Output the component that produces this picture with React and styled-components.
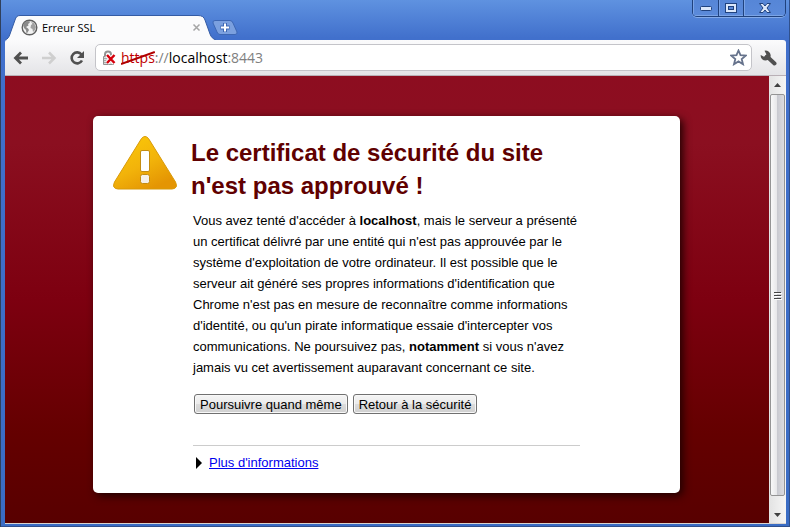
import styled, { createGlobalStyle } from "styled-components";

const GlobalStyle = createGlobalStyle`
  * {
    box-sizing: border-box;
  }
  body {
    margin: 0;
    font-family: "Liberation Sans", Arial, sans-serif;
  }
`;

const Window = styled.div`
  min-height: 100vh;
  display: flex;
  flex-direction: column;
  padding: 0 4px 3px 5px;
  background: linear-gradient(#5f92e0, #4170cc 38px, #3a6cc4);
  box-shadow: inset 1px 0 #30405c, inset -1px 0 #30508c, inset 0 -1px #30508c;
`;

const TitleBar = styled.header`
  display: flex;
  align-items: flex-end;
  justify-content: space-between;
  height: 40px;
`;

const TabStrip = styled.div`
  display: flex;
  align-items: flex-end;
`;

const Tab = styled.div`
  position: relative;
  display: flex;
  align-items: center;
  gap: 4px;
  width: 211px;
  height: 25px;
  padding: 0 15px 0 16px;
`;

const TabShape = styled.svg`
  position: absolute;
  left: 0;
  top: 0;
`;

const TabTitle = styled.span`
  position: relative;
  flex: 1;
  font: 11px/16px "Open Sans", sans-serif;
  color: #000;
`;

const Icon = styled.svg`
  position: relative;
  display: block;
  flex: none;
`;

const PlainButton = styled.button`
  display: flex;
  align-items: center;
  justify-content: center;
  flex: none;
  padding: 0;
  border: 0;
  background: none;
`;

const NewTab = styled(PlainButton)`
  margin: 0 0 5px -4px;
`;

const WindowControls = styled.div`
  display: flex;
  align-self: flex-start;
  height: 17px;
  border: 1px solid #20427e;
  border-top: 0;
  border-radius: 0 0 5px 5px;
  box-shadow: 0 1px #84aae8;
  overflow: hidden;
`;

const ControlButton = styled(PlainButton)`
  width: ${(props) => (props.$wide ? 42 : 25)}px;
  background: linear-gradient(#5686d7, #5b8ada);
  box-shadow: inset 1px -1px #7ba4e6;

  & + & {
    border-left: 1px solid #20427e;
  }
`;

const Toolbar = styled.nav`
  display: flex;
  align-items: center;
  height: 36px;
  padding: 0 9px 0 6px;
  background: linear-gradient(#fbfbfc, #e4e4e7);
  border-bottom: 1px solid #b9b0b6;
  border-radius: 2px 3px 0 0;
`;

const NavButton = styled(PlainButton)`
  width: 20px;
  height: 24px;
  margin-right: 8px;
`;

const AddressBar = styled.div`
  display: flex;
  align-items: center;
  flex: 1;
  height: 27px;
  margin-right: 8px;
  padding: 0 4px 0 6px;
  background: #fff;
  border: 1px solid #c4c4c9;
  border-radius: 5px;
`;

const Url = styled.div`
  flex: 1;
  margin-left: 3px;
  font: 14px/20px "Open Sans", sans-serif;
  color: #808080;
  white-space: nowrap;
`;

const Scheme = styled.span`
  position: relative;
  color: #c00000;
`;

const Strike = styled.svg`
  position: absolute;
  left: 0;
  top: 3px;
  width: 100%;
  height: 14px;
`;

const Host = styled.span`
  color: #000;
`;

const Content = styled.div`
  flex: 1;
  display: flex;
  border-bottom: 1px solid #d8d4d0;
`;

const Page = styled.main`
  flex: 1;
  padding: 40px 17px 30px 16px;
  background: linear-gradient(#8d0d20, #8b0f20 15%, #7d0010 50%, #640000 80%, #580000);
`;

const Card = styled.section`
  display: flex;
  align-items: flex-start;
  gap: 14px;
  max-width: 587px;
  margin: 0 auto;
  padding: 20px 100px 20px 20px;
  background: #fff;
  border-radius: 5px;
  box-shadow: 3px 3px 8px #200000;
`;

const Message = styled.div`
  flex: 1;
`;

const Title = styled.h1`
  margin: 0 0 8px;
  font-size: 24px;
  line-height: 33px;
  color: #600000;
`;

const Details = styled.div`
  margin-left: 2px;
  font-size: 13px;
  line-height: 21px;
  color: #000;
`;

const Text = styled.p`
  margin: 0;
`;

const Actions = styled.div`
  display: flex;
  gap: 5px;
  padding: 16px 1px 31px;
`;

const ActionButton = styled.button`
  height: 20px;
  padding: 1px 5px 0;
  font: 13px/17px "Liberation Sans", Arial, sans-serif;
  color: #000;
  white-space: nowrap;
  background: linear-gradient(#f4f4f4, #ebebeb 50%, #dcdcdc 50%, #d0d0d0);
  border: 1px solid #707070;
  border-radius: 3px;
  box-shadow: inset 0 0 0 1px #f8f8f8;
`;

const More = styled.div`
  display: flex;
  align-items: center;
  gap: 7px;
  padding: 6px 0 0 3px;
  border-top: 1px solid #ccc;

  a {
    color: #0000ee;
  }
`;

const ScrollBar = styled.div`
  display: flex;
  flex-direction: column;
  width: 17px;
  padding-right: 1px;
  background: linear-gradient(90deg, #e3e3e3, #f5f5f5);
`;

const ScrollButton = styled(PlainButton)`
  height: ${(props) => (props.$last ? 27 : 18)}px;
  padding-top: ${(props) => (props.$last ? 10 : 0)}px;
`;

const Thumb = styled.div`
  flex: 1;
  display: flex;
  align-items: center;
  justify-content: center;
  margin: 0 0 0 1px;
  border: 1px solid #949494;
  border-radius: 2px;
  background: linear-gradient(90deg, #f8f8f8, #e7e7e9 45%, #c9cad0 50%, #dcdce0);
`;

function GlobeIcon() {
  return (
    <Icon width="17" height="17" viewBox="0 0 17 17">
      <circle cx="8.5" cy="8.5" r="7.3" fill="#f2f2f2" stroke="#606060" strokeWidth="1.4" />
      <path d="M3 4l3-2 3 .5-.5 1.5L7 5l.5 1.5L5 8l2 1.500 1 1.5-1.5 2.5-1 1L5 11 3 9 2 6z" fill="#8b8b8b" />
      <path d="M10 3l3 1 2 4-1 3-2 2-.5-3-2-1 .5-3 1.5-1z" fill="#a0a0a0" />
    </Icon>
  );
}

function LockIcon() {
  return (
    <Icon width="16" height="16" viewBox="0 0 16 16">
      <path d="M3 7V4.500a3 3 0 0 1 6 0V7" fill="none" stroke="#929292" strokeWidth="2" />
      <path d="M1.500 6.500h10v8h-10z" fill="#ddd" stroke="#929292" />
      <path d="M2 8.500h9M2 10.500h9M2 12.500h9" stroke="#aaa" />
      <path d="M5 5l7.500 8M12.500 5l-7.500 8" stroke="#fff" strokeWidth="4.5" />
      <path d="M5 5l7.500 8M12.500 5l-7.500 8" stroke="#d5000c" strokeWidth="2.5" />
    </Icon>
  );
}

function WarningIcon() {
  return (
    <Icon width="64" height="54" viewBox="0 0 64 54" aria-hidden="true">
      <defs>
        <linearGradient id="sign" x1="0" y1="0" x2="0.6" y2="1">
          <stop offset="0" stopColor="#fccb08" />
          <stop offset="0.6" stopColor="#f2b30a" />
          <stop offset="1" stopColor="#e49503" />
        </linearGradient>
      </defs>
      <path
        d="M28.5 2.5Q32-1.5 35.5 2.5L62.5 46Q65.5 52.5 59 53H5Q-1.5 52.5 1.5 46z"
        fill="url(#sign)"
        stroke="#d99a08"
      />
      <rect x="27.5" y="14.5" width="9" height="21" rx="1.5" fill="#fff" stroke="#c48c10" />
      <rect x="27.5" y="38.5" width="9" height="9" rx="2" fill="#f5f0e8" stroke="#c48c10" />
    </Icon>
  );
}

function BrowserTab() {
  return (
    <Tab>
      <TabShape width="211" height="25" viewBox="0 0 211 25">
        <path
          d="M0 25C3 24 4 22 5 19L10 5C11 2 12 .5 15 .5H193C197 .5 199 2 200 5L205 19C206 22 208 24 211 25z"
          fill="#fbfbfc"
        />
        <path
          d="M0 25C3 24 4 22 5 19L10 5C11 2 12 .5 15 .5H193C197 .5 199 2 200 5L205 19C206 22 208 24 211 25"
          fill="none"
          stroke="#345ba4"
        />
      </TabShape>
      <GlobeIcon />
      <TabTitle>Erreur SSL</TabTitle>
      <PlainButton aria-label="Fermer l'onglet">
        <Icon width="9" height="9" viewBox="0 0 9 9">
          <path d="M1.5 1.5l6 6M7.5 1.5l-6 6" stroke="#a5a5a5" strokeWidth="1.5" />
        </Icon>
      </PlainButton>
    </Tab>
  );
}

function App() {
  return (
    <>
      <GlobalStyle />
      <Window>
        <TitleBar>
          <TabStrip>
            <BrowserTab />
            <NewTab aria-label="Nouvel onglet">
              <Icon width="26" height="15" viewBox="0 0 26 15">
                <path
                  d="M3 .5H18Q20 .5 21 3L25 12Q25.5 14.5 23 14.5H8Q6 14.5 5 12L1 3Q.5 .5 3 .5z"
                  fill="#7ba0df"
                  stroke="#3d67b4"
                />
                <path d="M13 3v9M8.5 7.5h9" stroke="#3d67b4" strokeWidth="4" />
                <path d="M13 3.5v8M9 7.5h8" stroke="#fff" strokeWidth="2" />
              </Icon>
            </NewTab>
          </TabStrip>
          <WindowControls>
            <ControlButton aria-label="Réduire">
              <Icon width="12" height="5" viewBox="0 0 12 5">
                <rect x=".5" y=".5" width="11" height="4" rx="1" fill="#dbe7fa" stroke="#20427e" />
              </Icon>
            </ControlButton>
            <ControlButton aria-label="Agrandir">
              <Icon width="12" height="10" viewBox="0 0 12 10">
                <rect x=".5" y=".5" width="11" height="9" fill="#dbe7fa" stroke="#20427e" />
                <rect x="3.5" y="3.5" width="5" height="3" fill="#5b8ada" stroke="#20427e" />
              </Icon>
            </ControlButton>
            <ControlButton $wide aria-label="Fermer">
              <Icon width="12" height="10" viewBox="0 0 12 10">
                <path
                  d="M.5 .5H4L6 3L8 .5H11.5L8 5L11.5 9.5H8L6 7L4 9.5H.5L4 5z"
                  fill="#dbe7fa"
                  stroke="#20427e"
                />
              </Icon>
            </ControlButton>
          </WindowControls>
        </TitleBar>
        <Toolbar>
          <NavButton aria-label="Précédent">
            <Icon width="16" height="14" viewBox="0 0 16 14">
              <path d="M8 1.5L2.5 7L8 12.5M3 7h12" fill="none" stroke="#505050" strokeWidth="2.8" />
            </Icon>
          </NavButton>
          <NavButton aria-label="Suivant" disabled>
            <Icon width="16" height="14" viewBox="0 0 16 14">
              <path d="M8 1.5L13.5 7L8 12.5M13 7H1" fill="none" stroke="#cfcfcf" strokeWidth="2.5" />
            </Icon>
          </NavButton>
          <NavButton aria-label="Actualiser">
            <Icon width="16" height="16" viewBox="0 0 16 16">
              <path d="M12.5 4.5A5.5 5.5 0 1 0 13 10.5" fill="none" stroke="#505050" strokeWidth="2.6" />
              <path d="M15 1v7H8z" fill="#505050" />
            </Icon>
          </NavButton>
          <AddressBar>
            <LockIcon />
            <Url>
              <Scheme>
                https
                <Strike viewBox="0 0 34 14" preserveAspectRatio="none">
                  <path d="M0 13L34 1" stroke="#b00000" strokeWidth="2" />
                </Strike>
              </Scheme>
              ://<Host>localhost</Host>:8443
            </Url>
            <PlainButton aria-label="Ajouter aux favoris">
              <Icon width="17" height="17" viewBox="0 0 17 17">
                <path
                  d="M8.5 1.5L10.5 6.2L15.7 6.6L11.7 10L13 15.2L8.5 12.4L4 15.2L5.3 10L1.3 6.6L6.5 6.2z"
                  fill="#fff"
                  stroke="#66738c"
                  strokeWidth="1.8"
                />
              </Icon>
            </PlainButton>
          </AddressBar>
          <PlainButton aria-label="Outils">
            <Icon width="17" height="16" viewBox="0 0 17 16">
              <path d="M7 6.5L14.5 13.5" stroke="#505050" strokeWidth="4" strokeLinecap="round" />
              <path d="M4.5 .7A5 5 0 1 1 .7 5L4 6.8L6.5 4.5z" fill="#505050" />
            </Icon>
          </PlainButton>
        </Toolbar>
        <Content>
          <Page>
            <Card>
              <WarningIcon />
              <Message>
                <Title>Le certificat de sécurité du site n'est pas approuvé !</Title>
                <Details>
                  <Text>
                    Vous avez tenté d'accéder à <b>localhost</b>, mais le serveur a présenté un
                    certificat délivré par une entité qui n'est pas approuvée par le système
                    d'exploitation de votre ordinateur. Il est possible que le serveur ait généré
                    ses propres informations d'identification que Chrome n'est pas en mesure de
                    reconnaître comme informations d'identité, ou qu'un pirate informatique essaie
                    d'intercepter vos communications. Ne poursuivez pas, <b>notamment</b> si vous
                    n'avez jamais vu cet avertissement auparavant concernant ce site.
                  </Text>
                  <Actions>
                    <ActionButton>Poursuivre quand même</ActionButton>
                    <ActionButton>Retour à la sécurité</ActionButton>
                  </Actions>
                  <More>
                    <svg width="6" height="12" viewBox="0 0 6 12">
                      <path d="M0 0l6 6-6 6z" fill="#000" />
                    </svg>
                    <a href="#infos">Plus d'informations</a>
                  </More>
                </Details>
              </Message>
            </Card>
          </Page>
          <ScrollBar>
            <ScrollButton aria-label="Défiler vers le haut">
              <svg width="7" height="4" viewBox="0 0 7 4">
                <path d="M0 4l3.5-4L7 4z" fill="#404040" />
              </svg>
            </ScrollButton>
            <Thumb>
              <svg width="8" height="9" viewBox="0 0 8 9">
                <path d="M0 1.5h7M0 4.5h7M0 7.5h7" stroke="#444" />
                <path d="M1 2.5h7M1 5.5h7M1 8.5h7" stroke="#fff" />
              </svg>
            </Thumb>
            <ScrollButton $last aria-label="Défiler vers le bas">
              <svg width="7" height="4" viewBox="0 0 7 4">
                <path d="M0 0l3.5 4L7 0z" fill="#404040" />
              </svg>
            </ScrollButton>
          </ScrollBar>
        </Content>
      </Window>
    </>
  );
}

export default App;
